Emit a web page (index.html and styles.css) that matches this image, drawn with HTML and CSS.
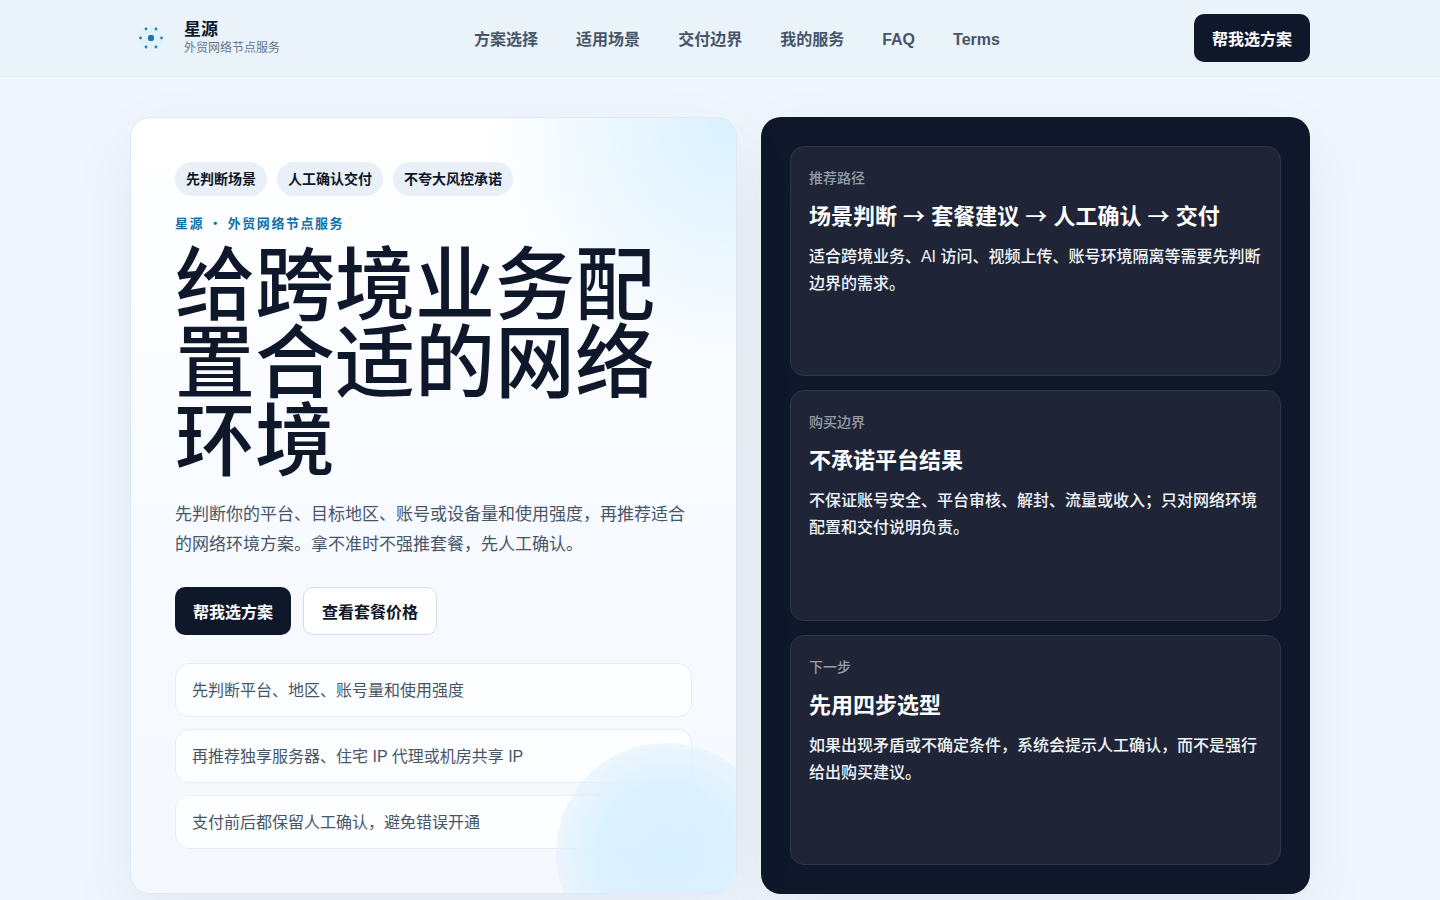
FILE: index.html
```
<!DOCTYPE html>
<html lang="zh-CN">
<head>
    <meta charset="UTF-8">
    <meta name="viewport" content="width=device-width, initial-scale=1.0">
    <title>星源 · 外贸网络节点服务</title>
    <link rel="stylesheet" href="styles.css">
</head>
<body>
    <header class="site-header">
        <div class="container header-inner">
            <a class="brand" href="#">
                <svg class="brand-logo" viewBox="0 0 42 42" aria-hidden="true">
                    <circle cx="21" cy="21" r="12" fill="#e0f2fa"/>
                    <path d="M21 6v30M10 21h22M16 12l10 18M26 12L16 30" stroke="#dceff8" stroke-width="1" fill="none"/>
                    <rect x="18" y="18" width="6" height="6" rx="2" fill="#1c78ad"/>
                    <g fill="#2a80b2">
                        <circle cx="10.5" cy="21" r="1.4"/>
                        <circle cx="31.5" cy="21" r="1.4"/>
                        <circle cx="16" cy="12" r="1.4"/>
                        <circle cx="26" cy="12" r="1.4"/>
                        <circle cx="16" cy="30" r="1.4"/>
                        <circle cx="26" cy="30" r="1.4"/>
                    </g>
                </svg>
                <span class="brand-text">
                    <strong>星源</strong>
                    <small>外贸网络节点服务</small>
                </span>
            </a>
            <nav class="nav">
                <a href="#plans">方案选择</a>
                <a href="#scenes">适用场景</a>
                <a href="#boundary">交付边界</a>
                <a href="#service">我的服务</a>
                <a href="#faq">FAQ</a>
                <a href="#terms">Terms</a>
            </nav>
            <a class="btn btn-dark" href="#choose">帮我选方案</a>
        </div>
    </header>

    <main class="container hero">
        <section class="hero-card">
            <div class="chips">
                <span class="chip">先判断场景</span>
                <span class="chip">人工确认交付</span>
                <span class="chip">不夸大风控承诺</span>
            </div>
            <p class="eyebrow">星源 · 外贸网络节点服务</p>
            <h1>给跨境业务配置合适的网络环境</h1>
            <p class="lead">先判断你的平台、目标地区、账号或设备量和使用强度，再推荐适合的网络环境方案。拿不准时不强推套餐，先人工确认。</p>
            <div class="actions">
                <a class="btn btn-dark" href="#choose">帮我选方案</a>
                <a class="btn btn-light" href="#plans">查看套餐价格</a>
            </div>
            <ul class="points">
                <li>先判断平台、地区、账号量和使用强度</li>
                <li>再推荐独享服务器、住宅 IP 代理或机房共享 IP</li>
                <li>支付前后都保留人工确认，避免错误开通</li>
            </ul>
        </section>

        <aside class="side-card">
            <article class="step">
                <span class="step-label">推荐路径</span>
                <h2>场景判断 <span class="arrow">→</span> 套餐建议 <span class="arrow">→</span> 人工确认 <span class="arrow">→</span> 交付</h2>
                <p>适合跨境业务、AI 访问、视频上传、账号环境隔离等需要先判断边界的需求。</p>
            </article>
            <article class="step">
                <span class="step-label">购买边界</span>
                <h2>不承诺平台结果</h2>
                <p>不保证账号安全、平台审核、解封、流量或收入；只对网络环境配置和交付说明负责。</p>
            </article>
            <article class="step">
                <span class="step-label">下一步</span>
                <h2>先用四步选型</h2>
                <p>如果出现矛盾或不确定条件，系统会提示人工确认，而不是强行给出购买建议。</p>
            </article>
        </aside>
    </main>
</body>
</html>
```
FILE: styles.css
```
* {
    box-sizing: border-box;
}
body {
    margin: 0;
    font-family: "Liberation Sans", "Noto Sans CJK SC", sans-serif;
    font-size: 16px;
    color: #0f172a;
    background: #eff6fd;
}
h1, h2, p, ul {
    margin: 0;
    padding: 0;
}
a {
    color: inherit;
    text-decoration: none;
}
.container {
    width: 100%;
    max-width: 1180px;
    margin: 0 auto;
}

/* header */
.site-header {
    background: #ebf3fa;
    border-bottom: 1px solid #e4ecf4;
}
.header-inner {
    display: flex;
    align-items: center;
    justify-content: space-between;
    padding: 14px 0;
}
.brand {
    display: flex;
    align-items: center;
    gap: 12px;
}
.brand-logo {
    width: 42px;
    height: 42px;
}
.brand-text {
    display: flex;
    flex-direction: column;
}
.brand-text strong {
    font-size: 17px;
    line-height: 20px;
}
.brand-text small {
    font-size: 12px;
    line-height: 16px;
    color: #64748b;
}
.nav {
    display: flex;
    align-items: baseline;
    gap: 38px;
    color: #475569;
    font-weight: 600;
}
.btn {
    display: inline-flex;
    align-items: center;
    height: 48px;
    padding: 0 18px;
    border-radius: 10px;
    font-weight: 700;
}
.btn-dark {
    background: #0f172a;
    color: #fff;
}
.btn-light {
    background: #fff;
    border: 1px solid #d5dde7;
}

/* hero */
.hero {
    display: grid;
    grid-template-columns: 1.05fr 0.95fr;
    gap: 24px;
    padding: 40px 0;
}
.hero-card {
    position: relative;
    overflow: hidden;
    padding: 44px;
    border: 1px solid #dfe9f2;
    border-radius: 20px;
    background:
        radial-gradient(circle at 100% 0, #d9f0ff 0, rgba(217, 240, 255, 0) 250px),
        linear-gradient(180deg, #fff 0, #f6faff 60%, #f5f9fd 100%);
    box-shadow: 0 24px 70px rgba(15, 23, 42, 0.06);
}
.hero-card::after {
    content: "";
    position: absolute;
    right: -40px;
    bottom: -70px;
    width: 220px;
    height: 220px;
    border-radius: 50%;
    background: radial-gradient(circle, #d9f0ff 0, rgba(217, 240, 255, 0.9) 70px, rgba(226, 241, 252, 0.6) 110px);
}
.chips {
    display: flex;
    gap: 10px;
}
.chip {
    padding: 0 11px;
    border-radius: 17px;
    background: #e9f0f7;
    font-size: 14px;
    font-weight: 700;
    line-height: 34px;
}
.eyebrow {
    margin-top: 17px;
    color: #0e72a8;
    font-family: "Noto Sans CJK SC", sans-serif;
    font-size: 13px;
    font-weight: 700;
    line-height: 20px;
    letter-spacing: 0.12em;
}
h1 {
    margin-top: 14px;
    font-size: 80px;
    font-weight: 500;
    line-height: 78px;
}
.lead {
    margin-top: 19px;
    color: #475569;
    font-size: 17px;
    line-height: 30px;
}
.actions {
    display: flex;
    gap: 12px;
    margin-top: 27px;
}
.points {
    display: grid;
    gap: 12px;
    margin-top: 28px;
    list-style: none;
}
.points li {
    padding: 14px 16px 12px;
    border: 1px solid #e6eef6;
    border-radius: 14px;
    background: rgba(255, 255, 255, 0.8);
    color: #475569;
    line-height: 26px;
}

/* dark panel */
.side-card {
    display: grid;
    grid-auto-rows: 1fr;
    gap: 14px;
    padding: 29px;
    border-radius: 20px;
    background: #0f172a;
    box-shadow: 0 24px 70px rgba(15, 23, 42, 0.06);
}
.step {
    padding: 19px 18px;
    border: 1px solid #2d3445;
    border-radius: 14px;
    background: #1f2537;
    color: #f1f5f9;
}
.step-label {
    display: block;
    color: #969da9;
    font-size: 14px;
    font-weight: 500;
    line-height: 24px;
}
.step h2 {
    margin: 10px 0;
    color: #fff;
    font-size: 22px;
    line-height: 33px;
}
.arrow {
    font-family: "Noto Sans CJK SC", sans-serif;
    font-weight: 500;
    line-height: 1;
}
.step p {
    font-weight: 500;
    line-height: 27px;
}
```
